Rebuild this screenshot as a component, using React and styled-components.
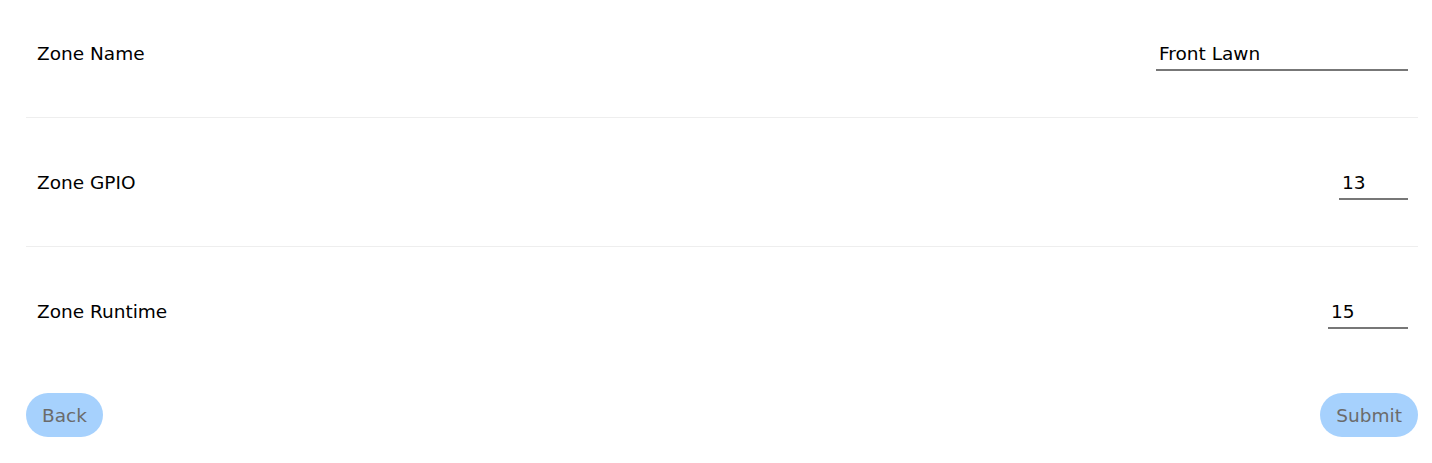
import React from "react";
import styled, { createGlobalStyle } from "styled-components";

const Global = createGlobalStyle`
  html, body { margin: 0; padding: 0; background: #fff; }
  body { font-family: "DejaVu Sans", Verdana, sans-serif; color: #000; }
`;

const Page = styled.div`
  padding: 0 14px 0 26px;
  width: 1392px;
`;

const Row = styled.div`
  display: flex;
  align-items: center;
  justify-content: space-between;
  height: ${(p) => (p.$first ? "106px" : "128px")};
  padding: ${(p) => (p.$first ? "0 10px 11px 11px" : "0 10px 0 11px")};
  border-bottom: ${(p) => (p.$last ? "none" : "1px solid #eeeeee")};
`;

const Label = styled.span`
  font-size: 18.5px;
  line-height: 22px;
  padding-top: 1px;
`;

const Input = styled.input`
  width: ${(p) => p.$w}px;
  box-sizing: border-box;
  border: none;
  border-bottom: 2px solid #777777;
  font-family: "DejaVu Sans", Verdana, sans-serif;
  font-size: 18.5px;
  line-height: 22px;
  padding: 4px 3px 4px;
  margin-top: 4px;
  outline: none;
  background: transparent;
  color: #000;
`;

const Actions = styled.div`
  display: flex;
  justify-content: space-between;
  margin-top: 18px;
`;

const Button = styled.button`
  height: 44px;
  padding: 0 16px;
  border: none;
  border-radius: 22px;
  background: #a6d1fd;
  color: #6b6b6b;
  font-family: "DejaVu Sans", Verdana, sans-serif;
  font-size: 18.5px;
  cursor: pointer;
`;

export default function App() {
  return (
    <Page>
      <Global />
      <Row $first>
        <Label>Zone Name</Label>
        <Input $w={252} defaultValue="Front Lawn" />
      </Row>
      <Row>
        <Label>Zone GPIO</Label>
        <Input $w={69} defaultValue="13" />
      </Row>
      <Row $last>
        <Label>Zone Runtime</Label>
        <Input $w={80} defaultValue="15" />
      </Row>
      <Actions>
        <Button>Back</Button>
        <Button>Submit</Button>
      </Actions>
    </Page>
  );
}
